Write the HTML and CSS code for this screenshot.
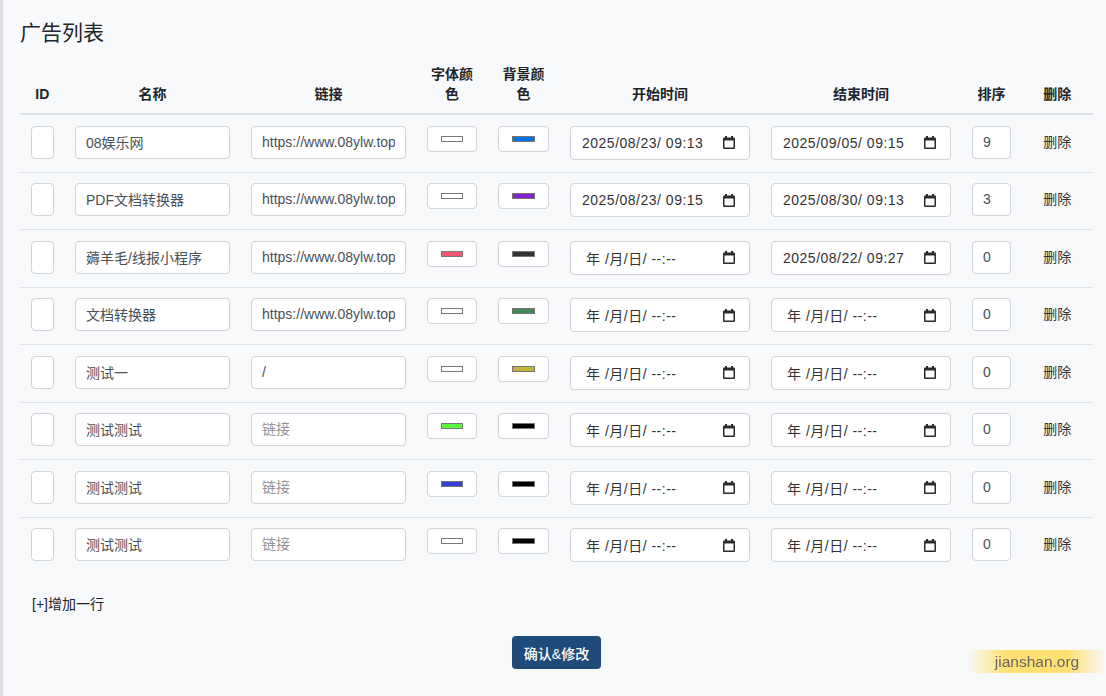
FILE: index.html
```html
<!DOCTYPE html>
<html lang="zh-CN">
<head>
    <meta charset="UTF-8">
    <meta name="viewport" content="width=device-width, initial-scale=1.0">
    <title>广告列表</title>
    <link rel="stylesheet" href="styles.css">
</head>
<body>

<div class="page">
    <h2 class="page-title">广告列表</h2>

    <table class="ad-table">
        <thead>
            <tr>
                <th class="col-id">ID</th>
                <th class="col-name">名称</th>
                <th class="col-link">链接</th>
                <th class="col-color">字体颜色</th>
                <th class="col-bg">背景颜色</th>
                <th class="col-time">开始时间</th>
                <th class="col-time2">结束时间</th>
                <th class="col-sort">排序</th>
                <th class="col-del">删除</th>
            </tr>
        </thead>
        <tbody id="ad-rows">
            <tr>
                <td><input type="text" class="field"></td>
                <td><input type="text" class="field" value="08娱乐网"></td>
                <td><input type="text" class="field" value="https://www.08ylw.top/" placeholder="链接"></td>
                <td><input type="color" class="color-field" value="#ffffff"></td>
                <td><input type="color" class="color-field" value="#0a72de"></td>
                <td><div class="date-field"><span class="date-text">2025/08/23/ 09:13</span><svg class="cal-icon" width="12" height="13" viewBox="0 0 12 13"><rect x="0" y="1.5" width="12" height="11.5" rx="1" fill="#2b2b2b"/><rect x="1.5" y="4.5" width="9" height="7" fill="#fff"/><rect x="2" y="0" width="2" height="2" fill="#2b2b2b"/><rect x="8" y="0" width="2" height="2" fill="#2b2b2b"/></svg></div></td>
                <td><div class="date-field"><span class="date-text">2025/09/05/ 09:15</span><svg class="cal-icon" width="12" height="13" viewBox="0 0 12 13"><rect x="0" y="1.5" width="12" height="11.5" rx="1" fill="#2b2b2b"/><rect x="1.5" y="4.5" width="9" height="7" fill="#fff"/><rect x="2" y="0" width="2" height="2" fill="#2b2b2b"/><rect x="8" y="0" width="2" height="2" fill="#2b2b2b"/></svg></div></td>
                <td><input type="number" class="field" value="9"></td>
                <td><a class="del-link" onclick="removeRow(this)">删除</a></td>
            </tr>
            <tr>
                <td><input type="text" class="field"></td>
                <td><input type="text" class="field" value="PDF文档转换器"></td>
                <td><input type="text" class="field" value="https://www.08ylw.top/" placeholder="链接"></td>
                <td><input type="color" class="color-field" value="#ffffff"></td>
                <td><input type="color" class="color-field" value="#8224c9"></td>
                <td><div class="date-field"><span class="date-text">2025/08/23/ 09:15</span><svg class="cal-icon" width="12" height="13" viewBox="0 0 12 13"><rect x="0" y="1.5" width="12" height="11.5" rx="1" fill="#2b2b2b"/><rect x="1.5" y="4.5" width="9" height="7" fill="#fff"/><rect x="2" y="0" width="2" height="2" fill="#2b2b2b"/><rect x="8" y="0" width="2" height="2" fill="#2b2b2b"/></svg></div></td>
                <td><div class="date-field"><span class="date-text">2025/08/30/ 09:13</span><svg class="cal-icon" width="12" height="13" viewBox="0 0 12 13"><rect x="0" y="1.5" width="12" height="11.5" rx="1" fill="#2b2b2b"/><rect x="1.5" y="4.5" width="9" height="7" fill="#fff"/><rect x="2" y="0" width="2" height="2" fill="#2b2b2b"/><rect x="8" y="0" width="2" height="2" fill="#2b2b2b"/></svg></div></td>
                <td><input type="number" class="field" value="3"></td>
                <td><a class="del-link" onclick="removeRow(this)">删除</a></td>
            </tr>
            <tr>
                <td><input type="text" class="field"></td>
                <td><input type="text" class="field" value="薅羊毛/线报小程序"></td>
                <td><input type="text" class="field" value="https://www.08ylw.top/" placeholder="链接"></td>
                <td><input type="color" class="color-field" value="#f55a72"></td>
                <td><input type="color" class="color-field" value="#333333"></td>
                <td><div class="date-field empty"><span class="date-text">年 /月/日/ --:--</span><svg class="cal-icon" width="12" height="13" viewBox="0 0 12 13"><rect x="0" y="1.5" width="12" height="11.5" rx="1" fill="#2b2b2b"/><rect x="1.5" y="4.5" width="9" height="7" fill="#fff"/><rect x="2" y="0" width="2" height="2" fill="#2b2b2b"/><rect x="8" y="0" width="2" height="2" fill="#2b2b2b"/></svg></div></td>
                <td><div class="date-field"><span class="date-text">2025/08/22/ 09:27</span><svg class="cal-icon" width="12" height="13" viewBox="0 0 12 13"><rect x="0" y="1.5" width="12" height="11.5" rx="1" fill="#2b2b2b"/><rect x="1.5" y="4.5" width="9" height="7" fill="#fff"/><rect x="2" y="0" width="2" height="2" fill="#2b2b2b"/><rect x="8" y="0" width="2" height="2" fill="#2b2b2b"/></svg></div></td>
                <td><input type="number" class="field" value="0"></td>
                <td><a class="del-link" onclick="removeRow(this)">删除</a></td>
            </tr>
            <tr>
                <td><input type="text" class="field"></td>
                <td><input type="text" class="field" value="文档转换器"></td>
                <td><input type="text" class="field" value="https://www.08ylw.top/" placeholder="链接"></td>
                <td><input type="color" class="color-field" value="#ffffff"></td>
                <td><input type="color" class="color-field" value="#3e8a52"></td>
                <td><div class="date-field empty"><span class="date-text">年 /月/日/ --:--</span><svg class="cal-icon" width="12" height="13" viewBox="0 0 12 13"><rect x="0" y="1.5" width="12" height="11.5" rx="1" fill="#2b2b2b"/><rect x="1.5" y="4.5" width="9" height="7" fill="#fff"/><rect x="2" y="0" width="2" height="2" fill="#2b2b2b"/><rect x="8" y="0" width="2" height="2" fill="#2b2b2b"/></svg></div></td>
                <td><div class="date-field empty"><span class="date-text">年 /月/日/ --:--</span><svg class="cal-icon" width="12" height="13" viewBox="0 0 12 13"><rect x="0" y="1.5" width="12" height="11.5" rx="1" fill="#2b2b2b"/><rect x="1.5" y="4.5" width="9" height="7" fill="#fff"/><rect x="2" y="0" width="2" height="2" fill="#2b2b2b"/><rect x="8" y="0" width="2" height="2" fill="#2b2b2b"/></svg></div></td>
                <td><input type="number" class="field" value="0"></td>
                <td><a class="del-link" onclick="removeRow(this)">删除</a></td>
            </tr>
            <tr>
                <td><input type="text" class="field"></td>
                <td><input type="text" class="field" value="测试一"></td>
                <td><input type="text" class="field" value="/" placeholder="链接"></td>
                <td><input type="color" class="color-field" value="#ffffff"></td>
                <td><input type="color" class="color-field" value="#c4b240"></td>
                <td><div class="date-field empty"><span class="date-text">年 /月/日/ --:--</span><svg class="cal-icon" width="12" height="13" viewBox="0 0 12 13"><rect x="0" y="1.5" width="12" height="11.5" rx="1" fill="#2b2b2b"/><rect x="1.5" y="4.5" width="9" height="7" fill="#fff"/><rect x="2" y="0" width="2" height="2" fill="#2b2b2b"/><rect x="8" y="0" width="2" height="2" fill="#2b2b2b"/></svg></div></td>
                <td><div class="date-field empty"><span class="date-text">年 /月/日/ --:--</span><svg class="cal-icon" width="12" height="13" viewBox="0 0 12 13"><rect x="0" y="1.5" width="12" height="11.5" rx="1" fill="#2b2b2b"/><rect x="1.5" y="4.5" width="9" height="7" fill="#fff"/><rect x="2" y="0" width="2" height="2" fill="#2b2b2b"/><rect x="8" y="0" width="2" height="2" fill="#2b2b2b"/></svg></div></td>
                <td><input type="number" class="field" value="0"></td>
                <td><a class="del-link" onclick="removeRow(this)">删除</a></td>
            </tr>
            <tr>
                <td><input type="text" class="field"></td>
                <td><input type="text" class="field" value="测试测试"></td>
                <td><input type="text" class="field" placeholder="链接"></td>
                <td><input type="color" class="color-field" value="#5cf83c"></td>
                <td><input type="color" class="color-field" value="#000000"></td>
                <td><div class="date-field empty"><span class="date-text">年 /月/日/ --:--</span><svg class="cal-icon" width="12" height="13" viewBox="0 0 12 13"><rect x="0" y="1.5" width="12" height="11.5" rx="1" fill="#2b2b2b"/><rect x="1.5" y="4.5" width="9" height="7" fill="#fff"/><rect x="2" y="0" width="2" height="2" fill="#2b2b2b"/><rect x="8" y="0" width="2" height="2" fill="#2b2b2b"/></svg></div></td>
                <td><div class="date-field empty"><span class="date-text">年 /月/日/ --:--</span><svg class="cal-icon" width="12" height="13" viewBox="0 0 12 13"><rect x="0" y="1.5" width="12" height="11.5" rx="1" fill="#2b2b2b"/><rect x="1.5" y="4.5" width="9" height="7" fill="#fff"/><rect x="2" y="0" width="2" height="2" fill="#2b2b2b"/><rect x="8" y="0" width="2" height="2" fill="#2b2b2b"/></svg></div></td>
                <td><input type="number" class="field" value="0"></td>
                <td><a class="del-link" onclick="removeRow(this)">删除</a></td>
            </tr>
            <tr>
                <td><input type="text" class="field"></td>
                <td><input type="text" class="field" value="测试测试"></td>
                <td><input type="text" class="field" placeholder="链接"></td>
                <td><input type="color" class="color-field" value="#3240d8"></td>
                <td><input type="color" class="color-field" value="#000000"></td>
                <td><div class="date-field empty"><span class="date-text">年 /月/日/ --:--</span><svg class="cal-icon" width="12" height="13" viewBox="0 0 12 13"><rect x="0" y="1.5" width="12" height="11.5" rx="1" fill="#2b2b2b"/><rect x="1.5" y="4.5" width="9" height="7" fill="#fff"/><rect x="2" y="0" width="2" height="2" fill="#2b2b2b"/><rect x="8" y="0" width="2" height="2" fill="#2b2b2b"/></svg></div></td>
                <td><div class="date-field empty"><span class="date-text">年 /月/日/ --:--</span><svg class="cal-icon" width="12" height="13" viewBox="0 0 12 13"><rect x="0" y="1.5" width="12" height="11.5" rx="1" fill="#2b2b2b"/><rect x="1.5" y="4.5" width="9" height="7" fill="#fff"/><rect x="2" y="0" width="2" height="2" fill="#2b2b2b"/><rect x="8" y="0" width="2" height="2" fill="#2b2b2b"/></svg></div></td>
                <td><input type="number" class="field" value="0"></td>
                <td><a class="del-link" onclick="removeRow(this)">删除</a></td>
            </tr>
            <tr>
                <td><input type="text" class="field"></td>
                <td><input type="text" class="field" value="测试测试"></td>
                <td><input type="text" class="field" placeholder="链接"></td>
                <td><input type="color" class="color-field" value="#ffffff"></td>
                <td><input type="color" class="color-field" value="#000000"></td>
                <td><div class="date-field empty"><span class="date-text">年 /月/日/ --:--</span><svg class="cal-icon" width="12" height="13" viewBox="0 0 12 13"><rect x="0" y="1.5" width="12" height="11.5" rx="1" fill="#2b2b2b"/><rect x="1.5" y="4.5" width="9" height="7" fill="#fff"/><rect x="2" y="0" width="2" height="2" fill="#2b2b2b"/><rect x="8" y="0" width="2" height="2" fill="#2b2b2b"/></svg></div></td>
                <td><div class="date-field empty"><span class="date-text">年 /月/日/ --:--</span><svg class="cal-icon" width="12" height="13" viewBox="0 0 12 13"><rect x="0" y="1.5" width="12" height="11.5" rx="1" fill="#2b2b2b"/><rect x="1.5" y="4.5" width="9" height="7" fill="#fff"/><rect x="2" y="0" width="2" height="2" fill="#2b2b2b"/><rect x="8" y="0" width="2" height="2" fill="#2b2b2b"/></svg></div></td>
                <td><input type="number" class="field" value="0"></td>
                <td><a class="del-link" onclick="removeRow(this)">删除</a></td>
            </tr>
        </tbody>
    </table>

    <div class="add-row"><a onclick="addRow()">[+]增加一行</a></div>

    <div class="actions">
        <button class="btn-submit" type="button">确认&amp;修改</button>
    </div>
</div>

<div class="watermark">jianshan.org</div>

<script>
    const rows = document.getElementById('ad-rows');

    // 复制最后一行作为新行，并清空内容
    function addRow() {
        const last = rows.lastElementChild;
        const row = last.cloneNode(true);
        row.querySelectorAll('input[type=text], input[type=number]').forEach(function (input) {
            input.value = '';
        });
        rows.appendChild(row);
    }

    // 删除当前行
    function removeRow(link) {
        link.closest('tr').remove();
    }
</script>

</body>
</html>
```

FILE: styles.css
```css
* {
    box-sizing: border-box;
}

body {
    margin: 0;
    border-left: 3px solid #dddfe3;
    min-height: 100vh;
    background-color: #f8f9fa;
    color: #212529;
    font-family: "Liberation Sans", "Noto Sans CJK SC", sans-serif;
    font-size: 14px;
}

.page {
    padding: 20px 13px 20px 17px;
}

/* 标题 */
.page-title {
    margin: 0 0 11px;
    font-size: 21px;
    font-weight: normal;
    line-height: 25px;
}

/* 广告表格 */
.ad-table {
    width: 100%;
    table-layout: fixed;
    border-collapse: separate;
    border-spacing: 0;
}

.ad-table th {
    padding: 9px 10.5px;
    border-bottom: 2px solid #dee2e6;
    font-weight: bold;
    line-height: 19.6px;
    text-align: center;
    vertical-align: bottom;
}

.ad-table td {
    padding: 10.5px 10.5px 12px;
    border-top: 1px solid #dee2e6;
    vertical-align: top;
    text-align: center;
}

.ad-table tbody tr:first-child td {
    border-top: 0;
}

.col-id { width: 44.5px; }
.col-name { width: 176px; }
.col-link { width: 176px; }
.col-color { width: 71px; }
.col-bg { width: 72px; }
.col-time { width: 201px; }
.col-time2 { width: 201px; }
.col-sort { width: 60px; }
.col-del { width: 71.5px; }

/* 输入框 */
.field {
    display: block;
    width: 100%;
    height: 33px;
    padding: 0 10px 1px;
    border: 1px solid #ced4da;
    border-radius: 4px;
    background-color: #fff;
    color: #495057;
    font-family: inherit;
    font-size: 14px;
}

.field::placeholder {
    color: #8f959b;
}

.field[type=number] {
    -moz-appearance: textfield;
}

.field[type=number]::-webkit-inner-spin-button,
.field[type=number]::-webkit-outer-spin-button {
    -webkit-appearance: none;
    margin: 0;
}

/* 颜色选择 */
.color-field {
    display: block;
    width: 100%;
    height: 26px;
    padding: 0;
    border: 1px solid #ced4da;
    border-radius: 4px;
    background-color: #fff;
    cursor: pointer;
}

.color-field::-webkit-color-swatch-wrapper {
    padding: 9px 13px;
}

.color-field::-webkit-color-swatch {
    border: 1px solid #767676;
    border-radius: 0;
}

/* 日期时间 */
.date-field {
    display: flex;
    align-items: center;
    justify-content: space-between;
    height: 34px;
    padding: 0 14px 0 11px;
    border: 1px solid #ced4da;
    border-radius: 4px;
    background-color: #fff;
    color: #333;
    text-align: left;
}

.date-text {
    white-space: pre;
    letter-spacing: 0.5px;
}

.date-field.empty .date-text {
    padding-left: 4px;
}

.cal-icon {
    flex: none;
}

/* 删除链接 */
.del-link {
    display: block;
    line-height: 33px;
    color: #333;
    cursor: pointer;
}

.add-row {
    margin-top: 20px;
    padding-left: 12px;
    line-height: 20px;
}

.add-row a {
    cursor: pointer;
}

.actions {
    margin-top: 22px;
    text-align: center;
}

.btn-submit {
    height: 33px;
    padding: 0 12px;
    border: none;
    border-radius: 4px;
    background-color: #1f4b7b;
    color: #fff;
    font-family: inherit;
    font-size: 14px;
    font-weight: 500;
    cursor: pointer;
}

.btn-submit:hover {
    background-color: #183c63;
}

/* 右下角水印 */
.watermark {
    position: fixed;
    right: 0;
    bottom: 23px;
    width: 138px;
    height: 23px;
    line-height: 23px;
    text-align: center;
    color: #666;
    font-size: 15.5px;
    background: linear-gradient(90deg, rgba(255, 222, 100, 0) 0%, #ffe070 28%, #ffe070 72%, rgba(255, 222, 100, 0) 100%);
}
```
